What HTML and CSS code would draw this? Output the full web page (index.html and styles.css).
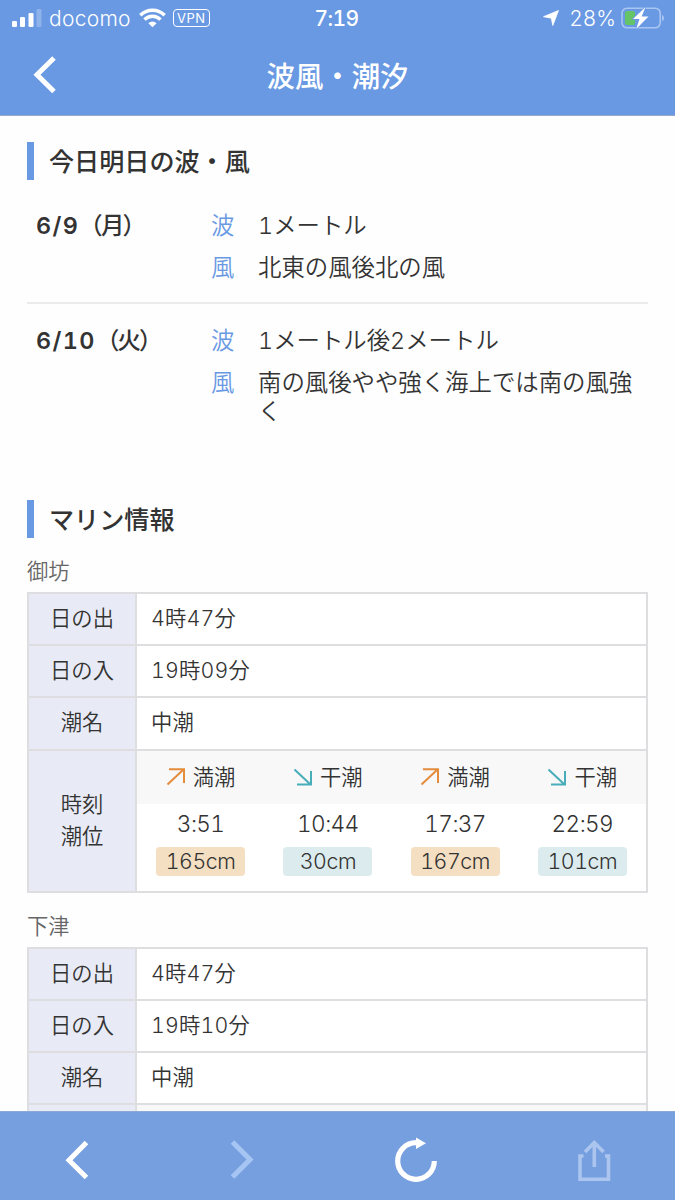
FILE: index.html
```html
<!DOCTYPE html>
<html lang="ja">
<head>
  <meta charset="UTF-8" />
  <meta name="viewport" content="width=device-width, initial-scale=1.0"/>
  <title>波風・潮汐</title>
  <link rel="stylesheet" href="styles.css">
</head>
<body>

<div class="app">
  <header class="header">
    <div class="status-bar">
      <div class="status-left">
        <svg class="signal" width="30" height="20" viewBox="0 0 30 20" fill="#fff">
          <rect x="0" y="13" width="5" height="6" rx="1.2"/>
          <rect x="8" y="9" width="5" height="10" rx="1.2"/>
          <rect x="16.5" y="5" width="5" height="14" rx="1.2"/>
          <rect x="24.5" y="1" width="5" height="18" rx="1.2" opacity="0.25"/>
        </svg>
        <span class="carrier">docomo</span>
        <svg class="wifi" width="27" height="20" viewBox="0 0 27 20" fill="none" stroke="#fff" stroke-width="3.4">
          <path d="M1.3 7.3a17.2 17.2 0 0 1 24.4 0"/>
          <path d="M5.5 11.6a11.3 11.3 0 0 1 16 0"/>
          <path d="M13.5 19.3l-4.1-4.1a5.9 5.9 0 0 1 8.2 0z" fill="#fff" stroke="none"/>
        </svg>
        <span class="vpn">VPN</span>
      </div>
      <div class="clock">7:19</div>
      <div class="status-right">
        <svg width="16" height="16" viewBox="0 0 16 16" fill="#fff" stroke="#fff" stroke-width="0.8" stroke-linejoin="round"><path d="M15.5 .5L9.8 15.5 8.3 8.2 .5 6.7z"/></svg>
        <span class="percent">28%</span>
        <svg width="44" height="22" viewBox="0 0 44 22">
          <rect x="1" y="1.2" width="38.2" height="19.6" rx="5" fill="none" stroke="#a9c5f1" stroke-width="1.6"/>
          <path d="M41 8v6.4q2-.6 2-3.2t-2-3.2z" fill="#a9c5f1"/>
          <rect x="4" y="4" width="10" height="14" rx="2" fill="#65c466"/>
          <path d="M24.5 0L12 12h6.5L15.2 22 27.5 9.5h-6.8z" fill="#fff" stroke="#6999e3" stroke-width="1.6" paint-order="stroke"/>
        </svg>
      </div>
    </div>
    <div class="nav">
      <svg class="back" width="24" height="38" viewBox="0 0 24 38" fill="none" stroke="#fff" stroke-width="5"><path d="M21 2L4 18.8 21 35.5"/></svg>
      <h1>波風・潮汐</h1>
    </div>
  </header>

  <main class="content">
    <h2>今日明日の波・風</h2>
    <div class="forecast">
      <div class="date"><span>6/9</span>（月）</div>
      <dl>
        <dt>波</dt><dd>1メートル</dd>
        <dt>風</dt><dd>北東の風後北の風</dd>
      </dl>
    </div>
    <div class="forecast">
      <div class="date"><span>6/10</span>（火）</div>
      <dl>
        <dt>波</dt><dd>1メートル後2メートル</dd>
        <dt>風</dt><dd>南の風後やや強く海上では南の風強く</dd>
      </dl>
    </div>

    <h2 class="marine-title">マリン情報</h2>

    <h3>御坊</h3>
    <table class="marine">
      <tr><th>日の出</th><td>4時47分</td></tr>
      <tr><th>日の入</th><td>19時09分</td></tr>
      <tr><th>潮名</th><td>中潮</td></tr>
      <tr class="tide-row">
        <th>時刻<br>潮位</th>
        <td class="tide-cell">
          <div class="tides">
            <div class="tide high">
              <div class="tide-type"><svg width="20" height="18" viewBox="0 0 20 18"><path d="M1.5 16.5L17.5 1.5M3 1.3H18V15"/></svg>満潮</div>
              <div class="time">3:51</div>
              <div class="level">165cm</div>
            </div>
            <div class="tide low">
              <div class="tide-type"><svg width="20" height="18" viewBox="0 0 20 18"><path d="M1.5 1.5L17.5 16.5M4 16.5H18V3"/></svg>干潮</div>
              <div class="time">10:44</div>
              <div class="level">30cm</div>
            </div>
            <div class="tide high">
              <div class="tide-type"><svg width="20" height="18" viewBox="0 0 20 18"><path d="M1.5 16.5L17.5 1.5M3 1.3H18V15"/></svg>満潮</div>
              <div class="time">17:37</div>
              <div class="level">167cm</div>
            </div>
            <div class="tide low">
              <div class="tide-type"><svg width="20" height="18" viewBox="0 0 20 18"><path d="M1.5 1.5L17.5 16.5M4 16.5H18V3"/></svg>干潮</div>
              <div class="time">22:59</div>
              <div class="level">101cm</div>
            </div>
          </div>
        </td>
      </tr>
    </table>

    <h3>下津</h3>
    <table class="marine">
      <tr><th>日の出</th><td>4時47分</td></tr>
      <tr><th>日の入</th><td>19時10分</td></tr>
      <tr><th>潮名</th><td>中潮</td></tr>
      <tr class="tide-row"><th></th><td class="tide-cell"><div class="tides"><div class="tide"><div class="tide-type"></div></div></div></td></tr>
    </table>
  </main>

  <footer class="toolbar">
    <svg class="tool-back" width="24" height="40" viewBox="0 0 24 40" fill="none" stroke="#fff" stroke-width="5"><path d="M21.5 2.5L4 20.2 21.5 37.5"/></svg>
    <svg class="tool-next" width="24" height="40" viewBox="0 0 24 40" fill="none" stroke="#a7c5f3" stroke-width="5"><path d="M2.5 2L20 19.5 2.5 37"/></svg>
    <svg class="tool-reload" width="44" height="48" viewBox="0 0 44 48">
      <path d="M22 6.7A18.3 18.3 0 1 0 40.3 25" fill="none" stroke="#fff" stroke-width="5.2"/>
      <path d="M22 1.5L32 7.2 22 13z" fill="#fff"/>
    </svg>
    <svg class="tool-share" width="34" height="44" viewBox="0 0 34 44" fill="none" stroke="#abc5ef" stroke-width="3.6">
      <path d="M6.5 18H3V41.3H31.5V18H28"/>
      <path d="M17.3 29V4M8 14L17.3 4.5 26.6 14"/>
    </svg>
  </footer>
</div>

</body>
</html>
```
FILE: styles.css
```css
* {
  box-sizing: border-box;
}

body {
  margin: 0;
  font-family: Inter, "Noto Sans CJK JP", sans-serif;
  font-weight: 350;
  font-variant-numeric: tabular-nums;
  color: #333;
  background: #fefefe;
}

h1, h2, h3, dl, dd {
  margin: 0;
}

svg {
  display: block;
  flex: none;
}

.app {
  display: flex;
  flex-direction: column;
  height: 1200px;
  overflow: hidden;
}

.header {
  flex: none;
  height: 116px;
  background: #6999e3;
  border-bottom: 1px solid #96a9c9;
  color: #fff;
}

/* status bar */
.status-bar {
  display: grid;
  grid-template-columns: 1fr auto 1fr;
  align-items: center;
  height: 36px;
  padding: 0 10px 0 12px;
  font-size: 21px;
  font-weight: 400;
}

.status-left, .status-right {
  display: flex;
  align-items: center;
}

.status-right {
  justify-content: flex-end;
}

.signal {
  margin-right: 7px;
}

.carrier {
  letter-spacing: 0.3px;
  font-weight: 300;
}

.wifi {
  margin: 0 7px 0 8px;
}

.vpn {
  width: 37px;
  height: 18px;
  border: 1.5px solid #fff;
  border-radius: 4px;
  font-size: 13px;
  line-height: 16px;
  text-align: center;
  letter-spacing: 0.5px;
}

.clock {
  margin-right: 4px;
  font-weight: 500;
  letter-spacing: -0.6px;
}

.percent {
  margin: 0 5px 0 10px;
  font-weight: 300;
}

.nav {
  display: grid;
  grid-template-columns: 60px 1fr 60px;
  align-items: center;
  height: 78px;
}

.back {
  margin-left: 33px;
}

.nav h1 {
  padding-top: 4px;
  font-size: 28.4px;
  font-weight: 500;
  line-height: 40px;
  text-align: center;
}

/* content */
.content {
  flex: 1;
  min-height: 0;
  overflow: hidden;
  padding: 26px 27px 0;
}

h2 {
  height: 38px;
  border-left: 7px solid #6999e3;
  padding-left: 15px;
  font-size: 25.1px;
  font-weight: 500;
  line-height: 40px;
}

.forecast {
  display: flex;
  padding: 31px 0 20px 9px;
}

.forecast + .forecast {
  border-top: 2px solid #ebebeb;
  padding-top: 22px;
}

.date {
  width: 175px;
  font-size: 23.4px;
  font-weight: 500;
  line-height: 30px;
  letter-spacing: -1.8px;
}

.date span {
  font-weight: 600;
  letter-spacing: 1.4px;
}

.forecast dl {
  display: grid;
  grid-template-columns: 47px 1fr;
  row-gap: 13px;
  flex: 1;
  font-size: 23.4px;
  line-height: 29px;
}

.forecast dt {
  color: #6999e3;
}

.marine-title {
  margin-top: 54px;
}

h3 {
  height: 54px;
  padding-top: 18px;
  font-size: 21.3px;
  font-weight: 350;
  line-height: 30px;
  color: #666;
}

.marine {
  width: 621px;
  border-collapse: collapse;
  table-layout: fixed;
  font-size: 21.3px;
}

.marine th, .marine td {
  height: 52.2px;
  padding: 0 0 2px;
  border: 2px solid #dedee0;
  font-weight: 350;
  line-height: 32px;
}

.marine th {
  width: 108px;
  background: #e8ebf5;
}

.marine td {
  padding-left: 14px;
  background: #fff;
  letter-spacing: 0.2px;
}

.marine .tide-row th, .marine td.tide-cell {
  height: 142px;
  padding: 0;
}

.marine .tide-row th {
  padding-bottom: 2px;
}

.tides {
  display: flex;
  height: 140px;
}

.tide {
  flex: 1;
  display: flex;
  flex-direction: column;
  align-items: center;
}

.tide-type {
  display: flex;
  justify-content: center;
  align-items: center;
  gap: 7px;
  width: 100%;
  height: 53px;
  background: #f8f8f8;
}

.tide-type svg {
  fill: none;
  stroke-width: 2;
}

.high svg {
  stroke: #e48b3c;
}

.low svg {
  stroke: #48acb9;
}

.time {
  height: 43px;
  font-size: 22.6px;
  line-height: 39px;
  letter-spacing: -0.6px;
}

.level {
  width: 89px;
  height: 29px;
  border-radius: 4px;
  line-height: 28px;
  text-align: center;
  letter-spacing: -0.4px;
}

.high .level {
  background: #f4dfc2;
}

.low .level {
  background: #dcecee;
}

/* bottom toolbar */
.toolbar {
  flex: none;
  display: flex;
  align-items: center;
  height: 89px;
  padding: 8px 0 0 65px;
  background: #769fdf;
  border-top: 1px solid #8ba8d6;
}

.tool-next {
  margin-left: 141px;
}

.tool-reload {
  margin-left: 140px;
}

.tool-share {
  margin-left: 139px;
}
```
